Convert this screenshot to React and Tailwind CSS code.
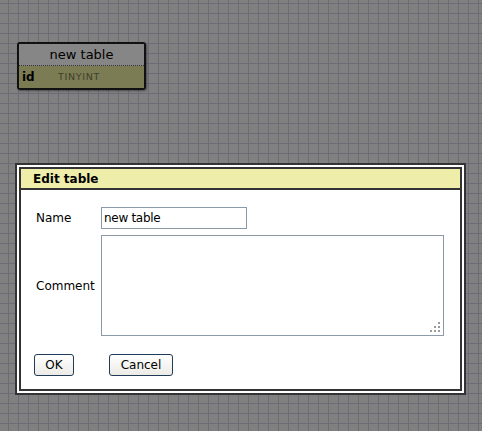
export default function App() {
  const font = { fontFamily: '"DejaVu Sans", Verdana, sans-serif' };
  return (
    <div
      className="relative w-[482px] h-[431px] overflow-hidden bg-[#808080] [background-image:linear-gradient(to_right,#6c6c78_1px,transparent_1px),linear-gradient(to_bottom,#6c6c78_1px,transparent_1px)] [background-size:10px_10px] [background-position:8px_3px]"
      style={font}
    >
      {/* table node on canvas */}
      <div className="absolute left-[17px] top-[42px] w-[129px] h-[48px] border-2 border-[#111] rounded-[3px] overflow-hidden shadow-[1px_1px_2px_rgba(0,0,0,0.4)]">
        <div className="h-[22px] bg-[#868686] flex items-center justify-center text-[13px] text-black border-b border-dotted border-[#333]">
          new table
        </div>
        <div className="h-[22px] bg-[#7c7c54] flex items-center">
          <span className="ml-[3px] w-[36px] text-[12px] font-bold text-black">id</span>
          <span className="text-[9.5px] tracking-[0.7px] text-[#3f3f2a]">TINYINT</span>
        </div>
      </div>

      {/* dialog */}
      <div className="absolute left-[15px] top-[163px] w-[451px] h-[232px] border-2 border-[#333] bg-white p-[2px]">
        <div className="w-full h-full border-2 border-[#333] bg-white flex flex-col">
          <div className="h-[21px] bg-[#eeeeaa] border-b-2 border-[#333] flex items-center pl-[12px] text-[12px] font-bold text-black">
            Edit table
          </div>
          <div className="pl-[15px] flex flex-col">
            <div className="mt-[17px] flex items-center">
              <span className="w-[65px] text-[12px] text-black">Name</span>
              <div className="w-[146px] h-[22px] border border-[#8a9aa8] flex items-center pl-[2px] text-[12px] text-black tracking-[-0.3px]">
                new table
              </div>
            </div>
            <div className="mt-[6px] flex items-center">
              <span className="w-[65px] text-[12px] text-black">Comment</span>
              <div className="relative w-[343px] h-[101px] border border-[#8a9aa8]">
                <svg className="absolute right-[2px] bottom-[2px]" width="12" height="12" viewBox="0 0 12 12">
                  <rect x="9" y="1" width="2" height="2" fill="#9a9a9a" />
                  <rect x="5" y="5" width="2" height="2" fill="#9a9a9a" />
                  <rect x="9" y="5" width="2" height="2" fill="#9a9a9a" />
                  <rect x="1" y="9" width="2" height="2" fill="#9a9a9a" />
                  <rect x="5" y="9" width="2" height="2" fill="#9a9a9a" />
                  <rect x="9" y="9" width="2" height="2" fill="#9a9a9a" />
                </svg>
              </div>
            </div>
            <div className="mt-[18px] -ml-[2px] flex items-center gap-[35px]">
              <button className="w-[40px] h-[22px] rounded-[3px] border border-[#1f3b57] bg-gradient-to-b from-[#ffffff] to-[#ecebe6] text-[12px] text-black flex items-center justify-center">
                OK
              </button>
              <button className="w-[64px] h-[22px] rounded-[3px] border border-[#1f3b57] bg-gradient-to-b from-[#ffffff] to-[#ecebe6] text-[12px] text-black flex items-center justify-center">
                Cancel
              </button>
            </div>
          </div>
        </div>
      </div>
    </div>
  );
}
